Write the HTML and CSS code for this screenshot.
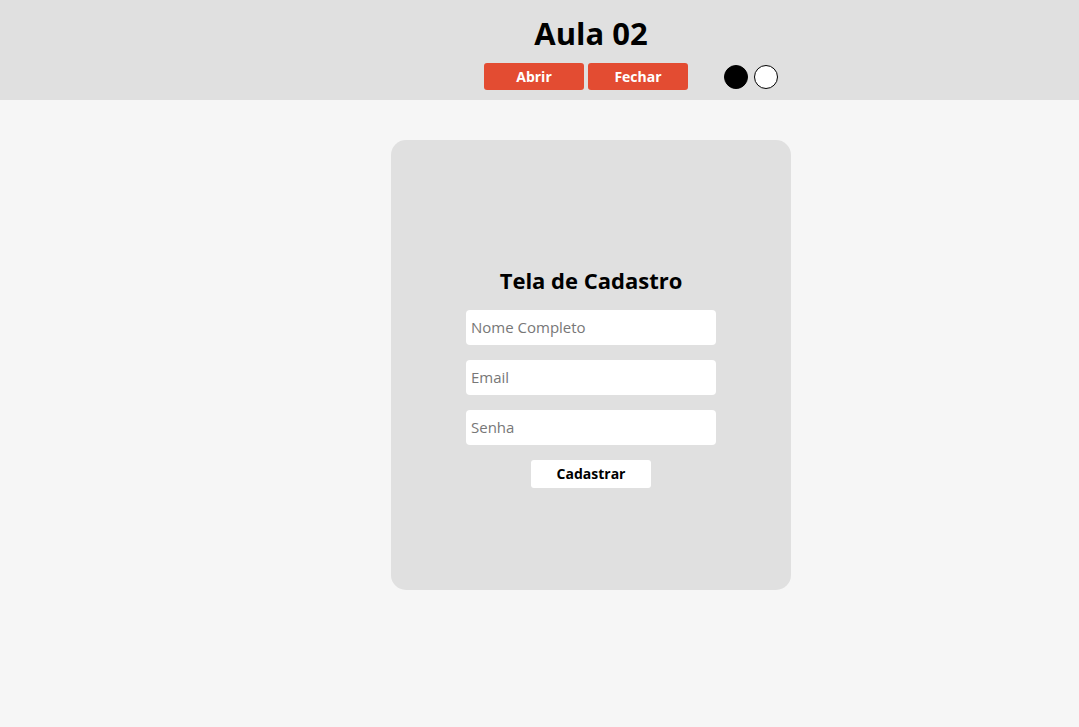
FILE: index.html
```html
<!DOCTYPE html>
<html lang="pt-BR">
<head>
<meta charset="utf-8">
<title>Aula 02</title>
<link rel="stylesheet" href="styles.css">
</head>
<body>
<header class="topo">
  <h1 class="titulo">Aula 02</h1>
  <div class="acoes">
    <button class="btn-menu">Abrir</button>
    <button class="btn-menu">Fechar</button>
    <div class="temas">
      <button class="tema tema-escuro" aria-label="Tema escuro"></button>
      <button class="tema tema-claro" aria-label="Tema claro"></button>
    </div>
  </div>
</header>
<main class="conteudo">
  <section class="cartao">
    <form class="form">
      <h2 class="form-titulo">Tela de Cadastro</h2>
      <input class="campo" type="text" placeholder="Nome Completo">
      <input class="campo" type="email" placeholder="Email">
      <input class="campo" type="password" placeholder="Senha">
      <button class="btn-cadastrar" type="button">Cadastrar</button>
    </form>
  </section>
</main>
</body>
</html>
```
FILE: styles.css
```css
* { box-sizing: border-box; }
html, body { margin: 0; padding: 0; }
body {
  background: #f6f6f6;
  font-family: "Open Sans", "Noto Sans", sans-serif;
  min-height: 727px;
}
.topo {
  background: #e0e0e0;
  height: 100px;
  padding-left: 103px;
  display: flex;
  flex-direction: column;
  align-items: center;
}
.titulo {
  margin: 11px 0 0;
  font-size: 31px;
  line-height: 44px;
  font-weight: 700;
  color: #000;
}
.acoes {
  width: 400px;
  padding-left: 93px;
  margin-top: 8px;
  display: flex;
  align-items: center;
  gap: 4px;
}
.btn-menu {
  width: 100px;
  height: 27px;
  border: none;
  border-radius: 3px;
  background: #e34c32;
  color: #fff;
  font-family: inherit;
  font-size: 14px;
  font-weight: 700;
  padding: 0;
}
.temas {
  display: flex;
  gap: 6px;
  margin-left: 32px;
}
.tema {
  width: 24px;
  height: 24px;
  border-radius: 50%;
  border: 1px solid #000;
  padding: 0;
}
.tema-escuro { background: #000; }
.tema-claro { background: #fff; }
.conteudo {
  padding: 40px 0 0 103px;
  display: flex;
  justify-content: center;
}
.cartao {
  width: 400px;
  height: 450px;
  background: #e0e0e0;
  border-radius: 15px;
  display: flex;
  align-items: center;
  justify-content: center;
}
.form {
  display: flex;
  flex-direction: column;
  align-items: center;
  gap: 15px;
  margin-top: 22px;
}
.form-titulo {
  margin: 0 0 0;
  font-size: 22px;
  line-height: 30px;
  font-weight: 700;
  color: #000;
}
.campo {
  width: 250px;
  height: 35px;
  border: none;
  border-radius: 4px;
  background: #fff;
  padding: 0 5px;
  font-family: inherit;
  font-size: 15px;
  color: #000;
}
.campo::placeholder { color: #777; }
.btn-cadastrar {
  width: 120px;
  height: 28px;
  border: none;
  border-radius: 3px;
  background: #fff;
  color: #000;
  font-family: inherit;
  font-size: 14px;
  font-weight: 700;
  padding: 0;
}
```
